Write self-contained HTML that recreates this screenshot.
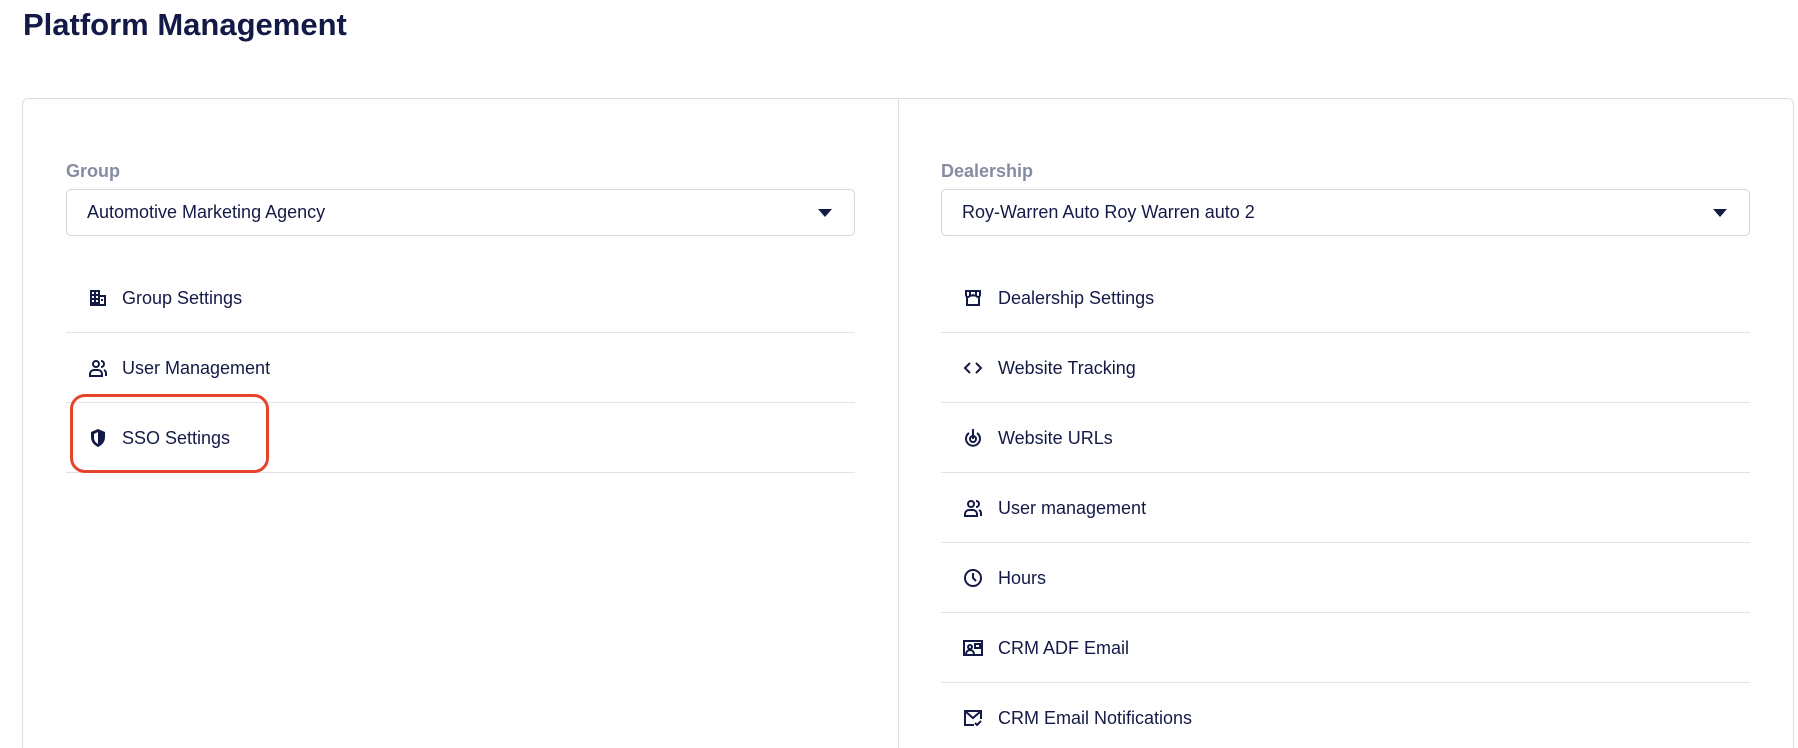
<!DOCTYPE html>
<html style="height:748px;overflow:hidden"><head><style>
body{margin:0;width:1798px;height:748px;background:#fff;font-family:"Liberation Sans",sans-serif;color:#141a46;overflow:hidden;position:relative}
h1{position:absolute;left:23px;top:7px;margin:0;font-size:31px;font-weight:bold;letter-spacing:0px}
.card{position:absolute;left:22px;top:98px;width:1772px;height:650px;border:1px solid #dcdde3;border-bottom:none;border-radius:6px 6px 0 0;box-sizing:border-box}
.vd{position:absolute;left:898px;top:98px;width:1px;height:650px;background:#dcdde3}
.lbl{position:absolute;font-size:18px;font-weight:bold;color:#878ca3}
.sel{position:absolute;height:47px;border:1px solid #d4d6de;border-radius:5px;box-sizing:border-box;font-size:18px;line-height:45px;padding-left:20px}
.sel:after{content:"";position:absolute;right:22px;top:19px;border-left:7px solid transparent;border-right:7px solid transparent;border-top:8px solid #141a46}
.row{position:absolute;height:70px;font-size:18px;line-height:70px;border-bottom:1px solid #e2e3e8;box-sizing:border-box}
.row svg{position:absolute;top:25px;width:20px;height:20px}
.red{position:absolute;left:70px;top:394px;width:199px;height:79px;border:3px solid #e5432a;border-radius:15px;box-sizing:border-box}
</style></head><body>
<h1>Platform Management</h1>
<div class="card"></div><div class="vd"></div>
<div class="lbl" style="left:66px;top:161px">Group</div>
<div class="sel" style="left:66px;top:189px;width:789px">Automotive Marketing Agency</div>
<div class="lbl" style="left:941px;top:161px">Dealership</div>
<div class="sel" style="left:941px;top:189px;width:809px">Roy-Warren Auto Roy Warren auto 2</div>

<div class="row" style="left:66px;top:263px;width:789px"><svg style="left:22px" viewBox="0 0 20 20"><path d="M2 2h10v5h6v11H2z" fill="#141a46"/><g fill="#fff"><rect x="4" y="4" width="2" height="2"/><rect x="8" y="4" width="2" height="2"/><rect x="4" y="8" width="2" height="2"/><rect x="8" y="8" width="2" height="2"/><rect x="4" y="12" width="2" height="2"/><rect x="8" y="12" width="2" height="2"/><rect x="12" y="9" width="4" height="7"/></g><rect x="13" y="11" width="2" height="2" fill="#141a46"/></svg><span style="margin-left:56px">Group Settings</span></div>
<div class="row" style="left:66px;top:333px;width:789px"><svg style="left:22px" viewBox="0 0 20 20" fill="none" stroke="#141a46" stroke-width="2"><circle cx="8" cy="6" r="3"/><path d="M2 18v-2a4 4 0 0 1 4-4h4a4 4 0 0 1 4 4v2zM13 3a3 3 0 0 1 0 6M16 12a4 4 0 0 1 2 4v2"/></svg><span style="margin-left:56px">User Management</span></div>
<div class="row" style="left:66px;top:403px;width:789px"><svg style="left:22px" viewBox="0 0 20 20"><path d="M10 1l7 3v5c0 5-3 8-7 10-4-2-7-5-7-10V4z" fill="#141a46"/><path d="M10 4v12c-2.5-1.5-4-3.5-4-6V6z" fill="#fff"/></svg><span style="margin-left:56px">SSO Settings</span></div>
<div class="red"></div>

<div class="row" style="left:941px;top:263px;width:809px"><svg style="left:22px" viewBox="0 0 20 20" fill="none" stroke="#141a46" stroke-width="2"><path d="M3 3h14v4a2 2 0 0 1-4 0 2 2 0 0 1-3 0 2 2 0 0 1-3 0 2 2 0 0 1-4 0zM4 9v8h12V9M7 3v4M13 3v4"/></svg><span style="margin-left:57px">Dealership Settings</span></div>
<div class="row" style="left:941px;top:333px;width:809px"><svg style="left:22px" viewBox="0 0 20 20" fill="none" stroke="#141a46" stroke-width="2"><path d="M7 5l-5 5 5 5M13 5l5 5-5 5"/></svg><span style="margin-left:57px">Website Tracking</span></div>
<div class="row" style="left:941px;top:403px;width:809px"><svg style="left:22px" viewBox="0 0 20 20" fill="none" stroke="#141a46" stroke-width="2"><path d="M6 5a7 7 0 1 0 8 0"/><circle cx="10" cy="11" r="3"/><path d="M10 1v10"/></svg><span style="margin-left:57px">Website URLs</span></div>
<div class="row" style="left:941px;top:473px;width:809px"><svg style="left:22px" viewBox="0 0 20 20" fill="none" stroke="#141a46" stroke-width="2"><circle cx="8" cy="6" r="3"/><path d="M2 18v-2a4 4 0 0 1 4-4h4a4 4 0 0 1 4 4v2zM13 3a3 3 0 0 1 0 6M16 12a4 4 0 0 1 2 4v2"/></svg><span style="margin-left:57px">User management</span></div>
<div class="row" style="left:941px;top:543px;width:809px"><svg style="left:22px" viewBox="0 0 20 20" fill="none" stroke="#141a46" stroke-width="2"><circle cx="10" cy="10" r="8"/><path d="M10 5v5l3 3"/></svg><span style="margin-left:57px">Hours</span></div>
<div class="row" style="left:941px;top:613px;width:809px"><svg style="left:22px" viewBox="0 0 20 20" fill="none" stroke="#141a46" stroke-width="2"><rect x="1" y="3" width="18" height="14"/><circle cx="7" cy="9" r="2"/><path d="M3 16a4 4 0 0 1 8 0M12 6h5v4h-5z"/></svg><span style="margin-left:57px">CRM ADF Email</span></div>
<div class="row" style="left:941px;top:683px;width:809px;height:65px;border:none"><svg style="left:22px" viewBox="0 0 20 20" fill="none" stroke="#141a46" stroke-width="2"><path d="M11 17H2V3h16v8M2 3l8 7 8-7M12 15l2 2 4-4"/></svg><span style="margin-left:57px">CRM Email Notifications</span></div>
</body></html>
